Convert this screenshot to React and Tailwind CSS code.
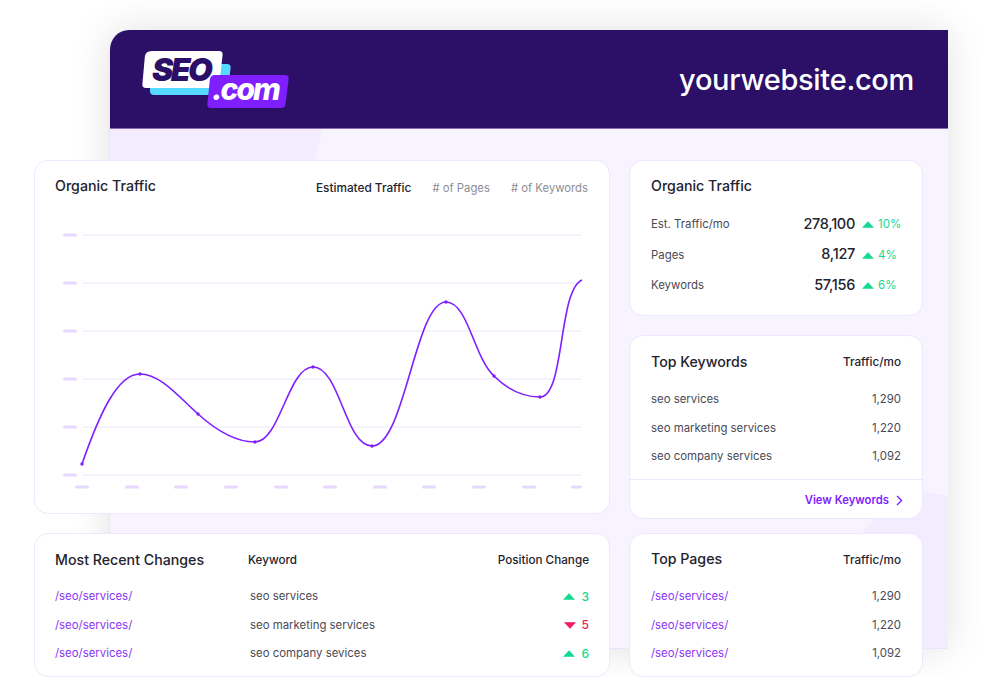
const Up = () => (
  <svg width="12" height="7" viewBox="0 0 12 7" className="shrink-0">
    <path d="M6 .6 11.4 6.4H.6z" fill="#12d98f" stroke="#12d98f" strokeWidth=".6" strokeLinejoin="round" />
  </svg>
);

const Down = () => (
  <svg width="12" height="7" viewBox="0 0 12 7" className="shrink-0">
    <path d="M6 6.4 11.4 .6H.6z" fill="#f01c60" stroke="#f01c60" strokeWidth=".6" strokeLinejoin="round" />
  </svg>
);

const Logo = () => (
  <svg width="150" height="60" viewBox="0 0 150 60" className="block">
    <path d="M13 14h73q4 0 3.6 4l-2.6 23q-.4 4-4.4 4H13q-4 0-4-4V18q0-4 4-4z" fill="#55d9ff" />
    <path d="M11 1h67q4 0 3.6 4l-3.2 29q-.4 4-4.4 4H5q-4 0-3.6-4l2.4-27Q4.200 1 11 1z" fill="#fff" />
    <path d="M74 25h70q4 0 3.600 4l-3 25q-.5 4-4.600 4H70q-4 0-3.600-4l2.400-24q.4-5 5.200-5z" fill="#7f1fff" />
    <text x="11" y="31" fontFamily="Inter, sans-serif" fontWeight="900" fontStyle="italic" fontSize="32" letterSpacing="-2.600" fill="#2c1068">SEO</text>
    <text x="71" y="50" fontFamily="Inter, sans-serif" fontWeight="800" fontStyle="italic" fontSize="30" letterSpacing="-2" fill="#fff">.com</text>
  </svg>
);

const Chart = () => {
  const grid = [235, 283, 331, 379, 427, 475];
  const xs = [75, 125, 174, 224, 274, 323, 373, 422, 472, 522, 571];
  const dots = [[82, 464], [140, 374], [198, 414], [255, 442], [313, 367], [372, 446], [446, 302], [494, 376], [540, 397]];
  return (
    <svg width="525" height="265" viewBox="60 228 525 265" className="block">
      {grid.map((y) => (
        <g key={y}>
          <line x1="82" x2="582" y1={y} y2={y} stroke="#f0e8fe" strokeWidth="1.2" />
          <rect x="63" y={y - 1.5} width="14" height="3" rx="1.5" fill="#e6d8fe" />
        </g>
      ))}
      {xs.map((x) => (
        <rect key={x} x={x} y="485.5" width={x === 571 ? 11 : 14} height="3" rx="1.5" fill="#e6d8fe" />
      ))}
      <path
        d="M82 464C100 412 118 374 140 374C160 374 178 396 198 414C218 432 236 442 255 442C280 442 288 367 313 367C340 367 345 446 372 446C405 446 415 302 446 302C468 302 474 358 494 376C510 392 525 397 540 397C565 397 558 290 582 280"
        fill="none"
        stroke="#7f1fff"
        strokeWidth="1.6"
      />
      {dots.map(([x, y]) => (
        <circle key={x} cx={x} cy={y} r="1.7" fill="#7f1fff" />
      ))}
    </svg>
  );
};

const Card = ({ className, children }) => (
  <div className={`bg-white border border-[#efe6ff] rounded-[14px] ${className}`}>{children}</div>
);

const stats = [
  { label: 'Est. Traffic/mo', value: '278,100', pct: '10%' },
  { label: 'Pages', value: '8,127', pct: '4%' },
  { label: 'Keywords', value: '57,156', pct: '6%' },
];

const changes = [
  { kw: 'seo services', up: true, n: 3 },
  { kw: 'seo marketing services', up: false, n: 5 },
  { kw: 'seo company sevices', up: true, n: 6 },
];

const keywords = [
  ['seo services', '1,290'],
  ['seo marketing services', '1,220'],
  ['seo company services', '1,092'],
];

const pages = ['1,290', '1,220', '1,092'];

export default function App() {
  return (
    <div className="relative w-[982px] h-[677px] overflow-hidden bg-white font-['Inter',sans-serif] text-[#23232e]">
      {/* window behind the cards */}
      <div className="absolute left-[109px] top-[30px] w-[839px] h-[619px] rounded-tl-[20px] bg-[#f7f3ff] border-b border-l border-[#ece3fe] shadow-[0_0_40px_rgba(0,0,0,0.12)] overflow-hidden">
        <div className="absolute left-0 top-[98px] w-[213px] h-[60px] bg-[#f3ecfe] [clip-path:polygon(0_0,100%_0,93%_100%,0_100%)]" />
        <div className="absolute left-[640px] top-[458px] w-[198px] h-[161px] bg-[#f3ecfe] [clip-path:polygon(0_100%,78%_0,100%_5%,100%_100%)]" />
        <div className="relative h-[99px] bg-[#2c1068] border-b border-[#8a6bb5] flex items-center justify-between pl-[31px] pr-[34px]">
          <div className="mt-[2px]"><Logo /></div>
          <div className="text-white text-[29px] font-medium tracking-[-0.3px] mt-[2px]">yourwebsite.com</div>
        </div>
      </div>

      <div className="relative pl-[34px] pt-[160px] flex gap-[19px]">
        <div className="w-[576px] flex flex-col gap-[19px] shrink-0">
          <Card className="h-[354px] px-[20px] pt-[16px]">
            <div className="flex items-center justify-between h-[20px]">
              <h2 className="text-[14.2px] font-medium -mt-[2px]">Organic Traffic</h2>
              <div className="flex gap-[21px] text-[11.3px] text-[#8c8c95] mt-[3px] mr-[1px]">
                <span className="font-medium text-[#23232e] text-[11.8px]">Estimated Traffic</span>
                <span># of Pages</span>
                <span># of Keywords</span>
              </div>
            </div>
            <div className="mt-[31px] ml-[5px]"><Chart /></div>
          </Card>
          <Card className="h-[144px] px-[20px] pt-[16px]">
            <div className="flex items-center h-[20px]">
              <h2 className="w-[193px] text-[14.2px] font-medium">Most Recent Changes</h2>
              <span className="text-[11.7px] font-medium mt-[2px]">Keyword</span>
              <span className="ml-auto text-[11.7px] font-medium mt-[2px]">Position Change</span>
            </div>
            <div className="mt-[16px] flex flex-col gap-[7px]">
              {changes.map((c) => (
                <div key={c.kw} className="flex items-center h-[21.5px] text-[11.4px]">
                  <span className="w-[195px] text-[#8a35f5]">/seo/services/</span>
                  <span className="text-[#4a4a55]">{c.kw}</span>
                  <span className={`ml-auto flex items-center gap-[6px] font-medium text-[12px] ${c.up ? 'text-[#12d98f]' : 'text-[#f01c60]'}`}>
                    {c.up ? <Up /> : <Down />}
                    {c.n}
                  </span>
                </div>
              ))}
            </div>
          </Card>
        </div>

        <div className="w-[294px] flex flex-col shrink-0">
          <Card className="h-[156px] px-[21px] pt-[15px]">
            <h2 className="text-[14.2px] font-medium h-[20px] leading-[20px]">Organic Traffic</h2>
            <div className="mt-[18px] flex flex-col gap-[9px]">
              {stats.map((s) => (
                <div key={s.label} className="flex items-center h-[21.5px]">
                  <span className="flex-1 text-[11.4px] text-[#4a4a55]">{s.label}</span>
                  <span className="text-[14.5px] font-medium tracking-[-0.3px] -mt-[2px]">{s.value}</span>
                  <span className="w-[46px] pl-[7px] flex items-center gap-[4px] text-[11.5px] text-[#12d98f]">
                    <Up />
                    {s.pct}
                  </span>
                </div>
              ))}
            </div>
          </Card>

          <Card className="h-[184px] mt-[19px] pt-[16px] flex flex-col">
            <div className="px-[21px] flex items-center justify-between h-[20px]">
              <h2 className="text-[14.2px] font-medium">Top Keywords</h2>
              <span className="text-[11.7px] font-medium mt-[2px]">Traffic/mo</span>
            </div>
            <div className="px-[21px] mt-[17px] flex flex-col gap-[7px]">
              {keywords.map(([k, v]) => (
                <div key={k} className="flex items-center justify-between h-[21.5px] text-[11.4px] text-[#4a4a55]">
                  <span>{k}</span>
                  <span>{v}</span>
                </div>
              ))}
            </div>
            <div className="mt-[11px] flex-1 border-t border-[#efe6ff] pt-[3px] px-[19px] flex items-center justify-end gap-[7px] text-[11.3px] font-semibold text-[#7f1fff]">
              View Keywords
              <svg width="7" height="11" viewBox="0 0 7 11" fill="none" stroke="#7f1fff" strokeWidth="1.4">
                <path d="M1 1l4.5 4.500L1 10" />
              </svg>
            </div>
          </Card>

          <Card className="h-[144px] mt-[14px] px-[21px] pt-[15px]">
            <div className="flex items-center justify-between h-[20px]">
              <h2 className="text-[14.2px] font-medium">Top Pages</h2>
              <span className="text-[11.7px] font-medium mt-[3px]">Traffic/mo</span>
            </div>
            <div className="mt-[17px] flex flex-col gap-[7px]">
              {pages.map((v) => (
                <div key={v} className="flex items-center justify-between h-[21.5px] text-[11.4px]">
                  <span className="text-[#8a35f5]">/seo/services/</span>
                  <span className="text-[#4a4a55]">{v}</span>
                </div>
              ))}
            </div>
          </Card>
        </div>
      </div>
    </div>
  );
}
